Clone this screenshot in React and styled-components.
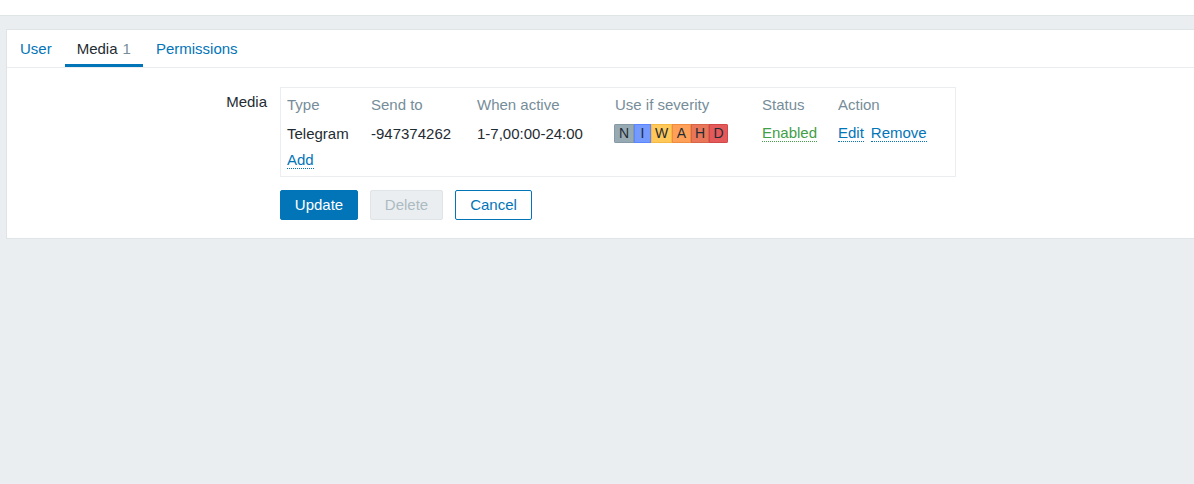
import React from "react";
import styled, { createGlobalStyle } from "styled-components";

const Global = createGlobalStyle`
  html, body {
    margin: 0;
    padding: 0;
    background: #ebeef0;
    overflow: hidden;
  }
  body {
    font-family: "Liberation Sans", Arial, sans-serif;
    font-size: 15px;
    color: #1f2c33;
  }
`;

const Header = styled.div`
  height: 15px;
  background: #ffffff;
  border-bottom: 1px solid #dfe4e7;
`;

const Main = styled.div`
  padding: 13px 0 0 6px;
  height: 468px;
  box-sizing: border-box;
`;

const Card = styled.div`
  background: #ffffff;
  border: 1px solid #dfe4e7;
  margin-right: -20px;
`;

const TabBar = styled.div`
  display: flex;
  gap: 1px;
  padding-left: 1px;
  border-bottom: 1px solid #ebeef0;
`;

const Tab = styled.div`
  height: 37px;
  box-sizing: border-box;
  padding: 3px 12px 0;
  display: flex;
  align-items: center;
  color: ${(p) => (p.$active ? "#1f2c33" : "#0275b8")};
  border-bottom: 3px solid ${(p) => (p.$active ? "#0275b8" : "transparent")};
`;

const Count = styled.span`
  color: #768d99;
  margin-left: 5px;
`;

const Form = styled.div`
  padding: 19px 0 18px 0;
  display: grid;
  grid-template-columns: 260px 1fr;
  column-gap: 13px;
  row-gap: 13px;
`;

const Label = styled.div`
  text-align: right;
  padding-top: 6px;
`;

const Box = styled.div`
  width: 676px;
  box-sizing: border-box;
  border: 1px solid #ebeef0;
  padding: 2px 6px 3px;
`;

const Row = styled.div`
  display: grid;
  grid-template-columns: 84px 106px 138px 147px 76px auto;
  align-items: center;
  height: ${(p) => p.$h || 28}px;
  color: ${(p) => (p.$head ? "#768d99" : "#1f2c33")};
`;

const Link = styled.a`
  color: ${(p) => p.$color || "#0275b8"};
  border-bottom: 1px dotted ${(p) => p.$color || "#0275b8"};
  text-decoration: none;
  justify-self: start;
  line-height: 17px;
`;

const Actions = styled.div`
  display: flex;
  gap: 7px;
`;

const Severity = styled.div`
  display: flex;
  justify-self: start;
  margin-left: -1px;
  border-radius: 2px;
  overflow: hidden;
`;

const Sev = styled.span`
  display: inline-flex;
  align-items: center;
  justify-content: center;
  height: 19px;
  width: ${(p) => p.$w}px;
  box-sizing: border-box;
  background: ${(p) => p.$bg};
  border: 1px solid ${(p) => p.$bd};
  color: #1f2c33;
  font-size: 14px;
`;

const Buttons = styled.div`
  grid-column: 2;
  display: flex;
  gap: 12px;
`;

const Button = styled.button`
  height: 30px;
  width: ${(p) => p.$w}px;
  box-sizing: border-box;
  border-radius: 2px;
  font-family: "Liberation Sans", Arial, sans-serif;
  font-size: 15px;
  padding: 0 0 2px;
  background: ${(p) => p.$bg};
  color: ${(p) => p.$fg};
  border: 1px solid ${(p) => p.$bd};
`;

const severities = [
  { l: "N", w: 20, bg: "#97aab3", bd: "#859aa4" },
  { l: "I", w: 17, bg: "#7499ff", bd: "#5b86ff" },
  { l: "W", w: 21, bg: "#ffc859", bd: "#f5b840" },
  { l: "A", w: 19, bg: "#ffa059", bd: "#f08c40" },
  { l: "H", w: 18, bg: "#e97659", bd: "#d8654a" },
  { l: "D", w: 19, bg: "#e45959", bd: "#d04848" },
];

export default function App() {
  return (
    <>
      <Global />
      <Header />
      <Main>
        <Card>
          <TabBar>
            <Tab>User</Tab>
            <Tab $active>
              Media<Count>1</Count>
            </Tab>
            <Tab>Permissions</Tab>
          </TabBar>
          <Form>
            <Label>Media</Label>
            <Box>
              <Row $head $h={29}>
                <span>Type</span>
                <span>Send to</span>
                <span>When active</span>
                <span>Use if severity</span>
                <span>Status</span>
                <span>Action</span>
              </Row>
              <Row>
                <span>Telegram</span>
                <span>-947374262</span>
                <span>1-7,00:00-24:00</span>
                <Severity>
                  {severities.map((s) => (
                    <Sev key={s.l} $w={s.w} $bg={s.bg} $bd={s.bd}>
                      {s.l}
                    </Sev>
                  ))}
                </Severity>
                <Link $color="#429e47">Enabled</Link>
                <Actions>
                  <Link>Edit</Link>
                  <Link>Remove</Link>
                </Actions>
              </Row>
              <Row $h={26}>
                <Link>Add</Link>
              </Row>
            </Box>
            <Buttons>
              <Button $w={78} $bg="#0275b8" $fg="#ffffff" $bd="#0275b8">Update</Button>
              <Button $w={73} $bg="#ebeef0" $fg="#acbbc2" $bd="#dfe4e7">Delete</Button>
              <Button $w={77} $bg="#ffffff" $fg="#0275b8" $bd="#0275b8">Cancel</Button>
            </Buttons>
          </Form>
        </Card>
      </Main>
    </>
  );
}
